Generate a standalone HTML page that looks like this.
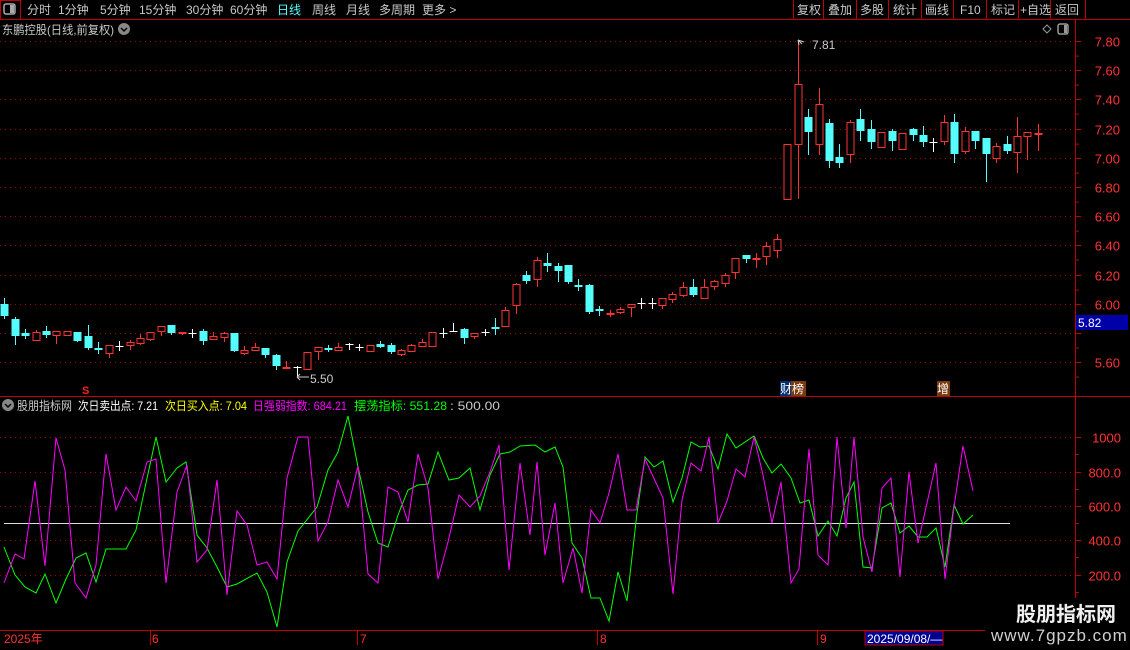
<!DOCTYPE html>
<html><head><meta charset="utf-8"><style>
html,body{margin:0;padding:0;background:#000;width:1130px;height:650px;overflow:hidden;font-family:"Liberation Sans","Noto Sans CJK SC",sans-serif}
</style></head><body>
<svg id="s" width="1130" height="650" style="position:absolute;left:0;top:0" xmlns="http://www.w3.org/2000/svg" font-family="Liberation Sans, Noto Sans CJK SC, sans-serif">
<line x1="0" y1="19.5" x2="1130" y2="19.5" stroke="#c00000"/>
<rect x="0.5" y="0.5" width="20" height="19" fill="none" stroke="#c00000"/>
<rect x="4" y="4" width="11" height="10" rx="2" fill="none" stroke="#aaa" stroke-width="1.5"/><rect x="10" y="5" width="4" height="8" fill="#aaa"/>
<g stroke="#c00000"><line x1="793.5" y1="0" x2="793.5" y2="19"/><line x1="823.5" y1="0" x2="823.5" y2="19"/><line x1="856.5" y1="0" x2="856.5" y2="19"/><line x1="888.5" y1="0" x2="888.5" y2="19"/><line x1="921.5" y1="0" x2="921.5" y2="19"/><line x1="953.5" y1="0" x2="953.5" y2="19"/><line x1="986.5" y1="0" x2="986.5" y2="19"/><line x1="1018.5" y1="0" x2="1018.5" y2="19"/><line x1="1050.5" y1="0" x2="1050.5" y2="19"/><line x1="1085.5" y1="0" x2="1085.5" y2="19"/></g>
<g font-size="12" fill="#c8c8c8">
<text x="27" y="14">分时</text><text x="58" y="14">1分钟</text><text x="100" y="14">5分钟</text><text x="139" y="14">15分钟</text><text x="186" y="14">30分钟</text><text x="230" y="14">60分钟</text><text x="277" y="14" fill="#54fcfc">日线</text><text x="312" y="14">周线</text><text x="346" y="14">月线</text><text x="379" y="14">多周期</text><text x="422" y="14">更多 &gt;</text>
<text x="797" y="14">复权</text><text x="828" y="14">叠加</text><text x="860" y="14">多股</text><text x="893" y="14">统计</text><text x="925" y="14">画线</text><text x="960" y="14">F10</text><text x="991" y="14">标记</text><text x="1020" y="14">+自选</text><text x="1055" y="14">返回</text>
<text x="2" y="34" textLength="112" lengthAdjust="spacingAndGlyphs">东鹏控股(日线,前复权)</text>
</g>
<circle cx="124" cy="29" r="6" fill="#888"/><path d="M121 28l3 3 3-3" stroke="#000" stroke-width="1.5" fill="none"/>
<path d="M1047 25l4 4-4 4-4-4z" fill="none" stroke="#999"/>
<rect x="1058" y="24" width="10" height="10" rx="2" fill="none" stroke="#999" stroke-width="1.5"/><rect x="1064" y="25" width="3" height="8" fill="#999"/>
<line x1="1075.5" y1="20" x2="1075.5" y2="630" stroke="#c00000"/>
<line x1="0" y1="396.5" x2="1130" y2="396.5" stroke="#c00000"/>
<line x1="0" y1="630.5" x2="985" y2="630.5" stroke="#c00000"/>
<g id="grid" stroke="#a00000" stroke-dasharray="1,4"></g>
<g id="ticks" stroke="#c00000"></g>
<g font-size="13" fill="#ff3232" text-anchor="end" id="lbl"></g>
<rect x="1076" y="315" width="52" height="15" fill="#0000a8"/><text x="1078" y="327" font-size="12" fill="#fff">5.82</text>
<g id="cd"></g>
<path d="M798 40l4 4 M798 40l1 5 M798 40l6 2" stroke="#ccc" fill="none"/><text x="812" y="49" font-size="12" fill="#ccc">7.81</text>
<path d="M297 377l3-3 M297 377l3 3 M297 377h12" stroke="#ccc" fill="none"/><text x="310" y="383" font-size="12" fill="#ccc">5.50</text>
<text x="82" y="394" font-size="11" fill="#ff2020" font-weight="bold">S</text>
<rect x="780" y="381" width="11" height="15" fill="#003070"/><rect x="791" y="381" width="15" height="15" fill="#7a3a10"/><text x="780" y="393" font-size="12" fill="#fff">财榜</text>
<rect x="937" y="381" width="13" height="15" fill="#7a3a10"/><text x="937" y="393" font-size="12" fill="#fff">增</text>
<circle cx="8" cy="405" r="6" fill="#888"/><path d="M5 404l3 3 3-3" stroke="#000" stroke-width="1.5" fill="none"/>
<g font-size="12" lengthAdjust="spacingAndGlyphs"><text x="17" y="410" fill="#c8c8c8" textLength="55" lengthAdjust="spacingAndGlyphs">股朋指标网</text><text x="78" y="410" fill="#fff" textLength="80" lengthAdjust="spacingAndGlyphs">次日卖出点: 7.21</text><text x="165" y="410" fill="#ffff00" textLength="82" lengthAdjust="spacingAndGlyphs">次日买入点: 7.04</text><text x="253" y="410" fill="#ff00ff" textLength="94" lengthAdjust="spacingAndGlyphs">日强弱指数: 684.21</text><text x="354" y="410" fill="#00ff00" textLength="93" lengthAdjust="spacingAndGlyphs">摆荡指标: 551.28</text><text x="450" y="410" fill="#c8c8c8" textLength="50" lengthAdjust="spacingAndGlyphs">: 500.00</text></g>
<line x1="4" y1="523.5" x2="1010" y2="523.5" stroke="#ddd"/>
<polyline fill="none" stroke="#00ff00" points="4,547 15,575 25,587 36,593 45,574 56,603 66,579 76,558 86,553 96,582 106,549 126,549 136,530 146,483 156,437 166,482 177,468 186,462 197,535 207,548 217,567 227,587 237,584 257,573 267,592 277,627 287,562 298,531 317,507 328,470 338,452 348,416 358,467 368,512 378,543 388,547 398,515 408,490 418,485 428,484 438,452 449,480 459,478 470,468 480,510 490,475 500,454 510,452 520,446 535,445 545,452 555,447 563,467 572,543 582,558 591,598 600,598 609,621 618,572 627,601 637,513 645,457 654,467 663,461 673,502 682,478 691,442 700,447 709,446 718,469 727,434 736,448 754,436 763,458 772,473 781,464 791,478 800,503 809,500 818,536 828,521 837,536 846,498 854,482 863,567 872,568 882,508 891,503 900,533 909,526 918,537 927,537 936,528 945,567 954,505 963,524 973,515"/>
<polyline fill="none" stroke="#ff00ff" points="4,583 15,554 24,559 35,481 45,566 56,438 65,470 75,583 86,598 96,565 106,454 116,510 126,487 136,501 147,462 156,459 166,583 177,492 187,465 197,562 207,550 217,480 227,595 237,511 247,525 257,565 267,562 277,579 287,478 298,437 308,437 318,541 328,522 338,480 348,507 358,466 368,574 378,583 388,487 398,492 408,522 418,454 428,488 438,579 448,542 459,495 470,507 480,496 490,472 499,445 509,570 520,463 530,535 537,462 545,555 555,503 563,583 573,548 582,593 591,510 600,523 609,493 618,454 627,510 636,510 645,459 663,498 673,594 682,500 691,463 701,471 709,437 718,523 727,501 736,469 745,477 754,437 763,475 772,523 781,482 791,583 799,569 809,449 818,555 828,565 837,437 846,528 854,437 863,537 872,572 882,488 891,478 900,577 909,472 918,543 936,463 945,579 954,507 963,446 973,491"/>
<g stroke="#c00000"><line x1="150.5" y1="630" x2="150.5" y2="645"/><line x1="357.5" y1="630" x2="357.5" y2="645"/><line x1="597.5" y1="630" x2="597.5" y2="645"/><line x1="817.5" y1="630" x2="817.5" y2="645"/></g>
<g font-size="12" fill="#ff3232"><text x="4" y="643">2025年</text><text x="152" y="643">6</text><text x="360" y="643">7</text><text x="600" y="643">8</text><text x="820" y="643">9</text></g>
<rect x="865" y="631" width="78" height="14" fill="#000090" stroke="#c00000"/><text x="867" y="643" font-size="12" fill="#fff">2025/09/08/—</text>
<rect x="985" y="598" width="145" height="52" fill="#000"/>
<text x="1016" y="621" font-size="20" font-weight="bold" fill="#f0f0f0">股朋指标网</text>
<text x="991" y="641" font-size="17" fill="#cfcfcf" letter-spacing="1">www.7gpzb.com</text>
</svg>
<script>
var NS="http://www.w3.org/2000/svg";
function el(p,t,a){var e=document.createElementNS(NS,t);for(var k in a)e.setAttribute(k,a[k]);p.appendChild(e);return e;}
var g=document.getElementById('grid'),tk=document.getElementById('ticks'),lb=document.getElementById('lbl');
var pr=["7.80","7.60","7.40","7.20","7.00","6.80","6.60","6.40","6.20","6.00","5.80","5.60"];
pr.forEach(function(p,i){var y=Math.round(41+i*29.2)+.5;el(g,'line',{x1:0,y1:y,x2:1075,y2:y});el(tk,'line',{x1:1075,y1:y,x2:1081,y2:y});el(tk,'line',{x1:1075,y1:y+14.6,x2:1079,y2:y+14.6});if(p!="5.80"){var t=el(lb,'text',{x:1120,y:y+5});t.textContent=p;}});
[["1000",437],["800.0",472],["600.0",506],["400.0",540],["200.0",575]].forEach(function(a){var y=a[1]+.5;el(g,'line',{x1:0,y1:y,x2:1075,y2:y});el(tk,'line',{x1:1075,y1:y,x2:1081,y2:y});el(tk,'line',{x1:1075,y1:y+17,x2:1079,y2:y+17});var t=el(lb,'text',{x:1121,y:y+5});t.textContent=a[0];});
var D="c 304 316 298 319|c 319 336 317 345|c 333 336 329 339|r 332 340 330 341|c 331 335 326 338|r 331 335 331 344|r 331 335 331 335|c 332 341 332 342|c 336 348 325 350|c 348 350 342 354|r 345 353 345 358|w 346 346 341 351|r 342 345 340 350|r 338 343 334 345|r 332 339 332 341|r 326 331 326 336|c 325 333 325 335|f 332 334 332 335|w 333 333 329 338|c 331 341 329 345|r 336 339 332 339|r 333 337 332 342|c 333 351 333 352|r 350 353 346 355|r 347 350 343 350|c 348 355 348 358|c 355 366 354 370|f 367 369 361 369|w 367 367 366 377|r 352 369 352 370|r 347 351 347 360|c 348 350 345 352|r 347 350 343 350|w 344 344 343 350|w 347 347 344 351|r 345 351 345 352|c 344 347 341 348|c 345 352 343 354|r 350 354 349 356|r 345 351 344 352|r 342 346 339 347|r 332 346 332 346|w 333 333 328 338|w 331 331 323 332|c 329 338 328 344|r 333 336 333 339|w 332 332 329 336|c 327 328 318 335|r 310 326 307 326|r 284 305 283 314|c 275 281 271 284|r 260 279 257 287|c 263 266 253 272|c 266 271 263 282|c 265 282 265 284|c 285 286 279 291|c 285 312 284 314|c 309 310 306 316|f 313 314 310 317|r 309 312 307 314|r 304 307 304 317|w 303 303 298 309|w 303 303 298 309|r 298 305 298 309|r 294 299 292 303|r 287 295 282 297|c 287 295 279 297|r 287 298 279 298|r 281 286 280 290|r 275 283 273 287|r 258 272 258 279|c 255 259 255 263|f 258 259 253 268|r 246 256 242 265|r 239 250 234 258|r 144 199 144 199|r 84 144 40 199|c 117 132 109 155|r 104 144 88 155|c 123 161 119 168|c 157 163 144 168|r 122 154 120 163|c 119 131 109 141|c 129 142 120 149|r 132 147 132 147|c 131 141 129 151|r 133 149 133 149|c 129 135 128 141|c 135 142 126 147|w 142 142 138 152|r 122 141 115 145|c 122 154 114 163|r 131 151 127 154|c 131 141 131 149|c 138 154 138 182|r 146 158 143 163|c 144 151 136 154|r 136 152 117 173|r 132 136 132 160|f 133 134 124 151".split("|");
var cd=document.getElementById('cd');
D.forEach(function(s,i){var a=s.split(" "),t=a[0],o=+a[1],c=+a[2],h=+a[3],l=+a[4];var x=Math.round(4.3+i*10.44)+.5;
var col=t=="c"?"#54fcfc":t=="w"?"#ffffff":"#ff3232";
el(cd,'line',{x1:x,y1:h,x2:x,y2:l,stroke:col});
if(t=="w"){el(cd,'line',{x1:x-4,y1:o+.5,x2:x+4,y2:o+.5,stroke:col});return;}
if(t=="r"){el(cd,'rect',{x:x-3.5,y:o+.5,width:7,height:Math.max(c-o,1),fill:"#000",stroke:col});}
else{el(cd,'rect',{x:x-4,y:o,width:8,height:Math.max(c-o,2),fill:col});}
});
</script>
</body></html>
